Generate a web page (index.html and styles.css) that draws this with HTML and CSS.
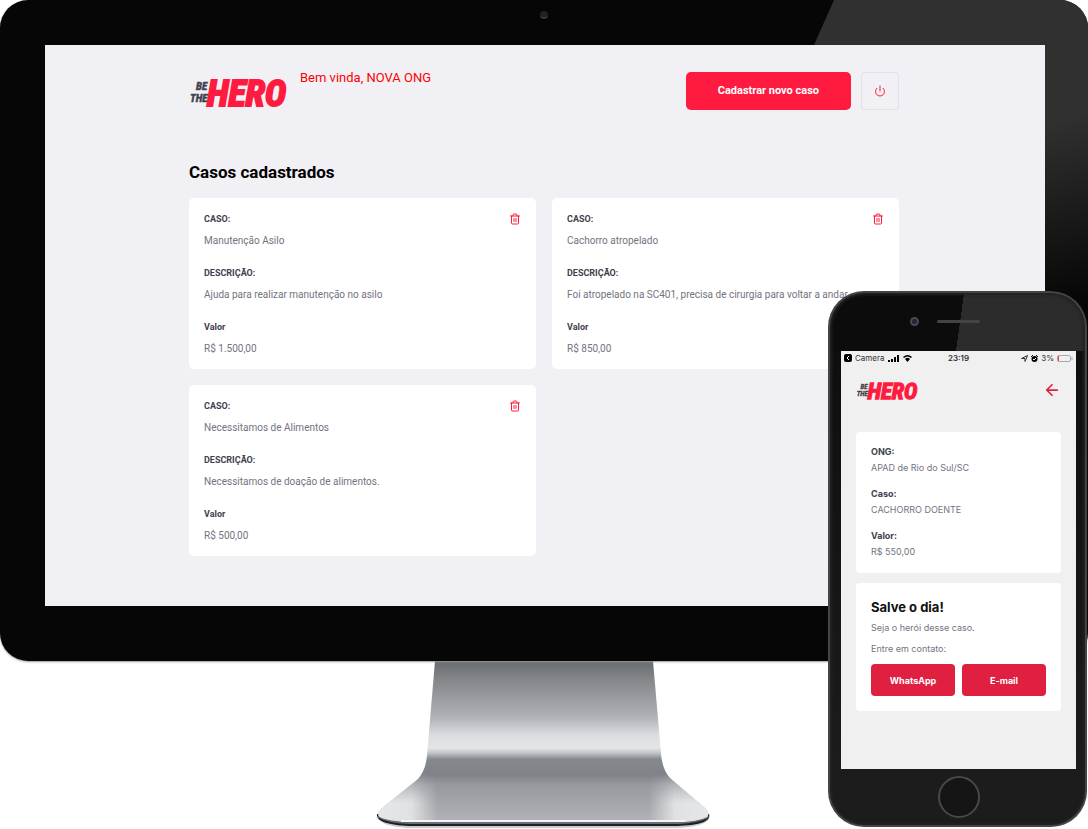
FILE: index.html
```html
<!DOCTYPE html>
<html lang="pt-BR">
<head>
<meta charset="utf-8">
<meta name="viewport" content="width=device-width, initial-scale=1">
<title>Be The Hero</title>
<link rel="stylesheet" href="styles.css">
</head>
<body>
<svg class="sprite" aria-hidden="true">
  <symbol id="trash" viewBox="0 0 24 24"><path d="M3 6h18M19 6v14a2 2 0 0 1-2 2H7a2 2 0 0 1-2-2V6m3 0V4a2 2 0 0 1 2-2h4a2 2 0 0 1 2 2v2M10 11v6M14 11v6"/></symbol>
  <symbol id="power" viewBox="0 0 24 24"><path d="M18.4 6.6a9 9 0 1 1-12.8 0M12 2v10"/></symbol>
  <symbol id="arrow" viewBox="0 0 24 24"><path d="M21 12H3M12 21l-9-9 9-9"/></symbol>
  <symbol id="logo" viewBox="0 0 98 42">
    <g class="logo-small"><text x="7" y="20">BE</text><text x="1" y="32">THE</text></g>
    <text class="logo-big" x="18" y="36">HERO</text>
  </symbol>
</svg>
<main class="scene">
  <section class="monitor">
    <span class="webcam"></span>
    <div class="screen">
      <div class="page">
        <header class="topbar">
          <svg class="logo" role="img" aria-label="Be The Hero"><use href="#logo"/></svg>
          <span class="welcome">Bem vinda, NOVA ONG</span>
          <a class="button" href="#novo">Cadastrar novo caso</a>
          <button class="power" type="button" aria-label="Sair"><svg class="icon"><use href="#power"/></svg></button>
        </header>
        <h1 class="heading">Casos cadastrados</h1>
        <ul class="cases">
          <li class="case">
            <dl class="facts">
              <dt>CASO:</dt><dd>Manutenção Asilo</dd>
              <dt>DESCRIÇÃO:</dt><dd>Ajuda para realizar manutenção no asilo</dd>
              <dt>Valor</dt><dd>R$ 1.500,00</dd>
            </dl>
            <button class="delete" type="button" aria-label="Excluir"><svg class="icon"><use href="#trash"/></svg></button>
          </li>
          <li class="case">
            <dl class="facts">
              <dt>CASO:</dt><dd>Cachorro atropelado</dd>
              <dt>DESCRIÇÃO:</dt><dd>Foi atropelado na SC401, precisa de cirurgia para voltar a andar</dd>
              <dt>Valor</dt><dd>R$ 850,00</dd>
            </dl>
            <button class="delete" type="button" aria-label="Excluir"><svg class="icon"><use href="#trash"/></svg></button>
          </li>
          <li class="case">
            <dl class="facts">
              <dt>CASO:</dt><dd>Necessitamos de Alimentos</dd>
              <dt>DESCRIÇÃO:</dt><dd>Necessitamos de doação de alimentos.</dd>
              <dt>Valor</dt><dd>R$ 500,00</dd>
            </dl>
            <button class="delete" type="button" aria-label="Excluir"><svg class="icon"><use href="#trash"/></svg></button>
          </li>
        </ul>
      </div>
    </div>
  </section>

  <svg class="stand" viewBox="0 0 334 168" aria-hidden="true">
    <defs>
      <linearGradient id="metal" x1="0" y1="0" x2="0" y2="1">
        <stop offset="0" stop-color="#676a6e"/><stop offset=".12" stop-color="#85878b"/><stop offset=".35" stop-color="#b0b2b7"/><stop offset=".46" stop-color="#dcdde0"/><stop offset=".54" stop-color="#e4e5e7"/><stop offset=".57" stop-color="#c4c6c9"/><stop offset=".61" stop-color="#85898e"/><stop offset=".71" stop-color="#7f8388"/><stop offset=".77" stop-color="#97999e"/><stop offset="1" stop-color="#b2b3b8"/>
      </linearGradient>
      <linearGradient id="shine" x1="0" y1="0" x2="1" y2="0">
        <stop offset="0" stop-color="#e6e7e9"/><stop offset=".1" stop-color="#e0e1e3"/><stop offset=".18" stop-color="#e0e1e3" stop-opacity="0"/><stop offset=".82" stop-color="#e0e1e3" stop-opacity="0"/><stop offset=".9" stop-color="#e0e1e3"/><stop offset="1" stop-color="#e6e7e9"/>
      </linearGradient>
      <linearGradient id="fade" x1="0" y1="0" x2="0" y2="1">
        <stop offset=".66" stop-color="#000"/><stop offset=".84" stop-color="#fff"/>
      </linearGradient>
      <mask id="foot"><rect width="334" height="169" fill="url(#fade)"/></mask>
    </defs>
    <path d="M1 154C-1 160 8 166 32 167H300C324 166 335 160 332 154Z" fill="#c9cacc"/>
    <path d="M0 153C-1 160 9 164 32 165H300C324 164 334 160 332 153Z" fill="#1b2023"/>
    <path d="M0 156Q10 162 32 163H300Q324 162 332 156L330 152H3Z" fill="#6b6d78"/>
    <path d="M58 0H276L284 92Q285 108 293 117L329 148Q333 153 330 156Q320 161 299 161H33Q10 160 3 156Q-1 153 4 148L41 118Q49 109 50 94Z" fill="url(#metal)"/>
    <path d="M58 0H276L284 92Q285 108 293 117L329 148Q333 153 330 156Q320 161 299 161H33Q10 160 3 156Q-1 153 4 148L41 118Q49 109 50 94Z" fill="url(#shine)" mask="url(#foot)"/>
    <path d="M24 160H308" stroke="#f6f6f7" stroke-width="2"/>
  </svg>

  <section class="phone">
    <div class="phone-top"><span class="lens"></span><span class="speaker"></span></div>
    <div class="phone-screen">
      <div class="status">
        <span class="status-left">
          <svg class="back-app" viewBox="0 0 8 8"><rect width="8" height="8" rx="2"/><path d="M5 2L3 4l2 2" stroke="#fff" fill="none"/></svg>
          Camera
          <svg class="signal" viewBox="0 0 12 7"><path d="M0 5h2v2H0zM3 4h2v3H3zM6 2h2v5H6zM9 0h2v7H9z"/></svg>
          <svg class="wifi" viewBox="0 0 9 7"><path d="M0 2Q4.500-2 9 2L8 3Q4.500 0 1 3ZM2 4Q4.500 1.500 7 4L4.500 7Z"/></svg>
        </span>
        <span class="time">23:19</span>
        <span class="status-right">
          <svg class="mini" viewBox="0 0 7 7"><path d="M.5 3.500L6.500.5 4 6.500V3.500Z" fill="none" stroke="#333"/></svg>
          <svg class="mini" viewBox="0 0 7 7"><circle cx="3.500" cy="4" r="3"/><path d="M0 2L2 0M7 2L5 0" stroke="#111"/><path d="M2 4l1 1 2-2" stroke="#eee" fill="none"/></svg>
          3%
          <svg class="battery" viewBox="0 0 16 7"><rect x=".5" y=".5" width="13" height="6" rx="1.500" fill="none" stroke="#aaa"/><path d="M1 1h1v5H1z" fill="#f33"/><path d="M15 2v3" stroke="#aaa"/></svg>
        </span>
      </div>
      <header class="app-bar">
        <svg class="app-logo" role="img" aria-label="Be The Hero"><use href="#logo"/></svg>
        <button class="back" type="button" aria-label="Voltar"><svg class="icon"><use href="#arrow"/></svg></button>
      </header>
      <dl class="app-card app-facts">
        <dt>ONG:</dt><dd>APAD de Rio do Sul/SC</dd>
        <dt>Caso:</dt><dd>CACHORRO DOENTE</dd>
        <dt>Valor:</dt><dd>R$ 550,00</dd>
      </dl>
      <section class="app-card contact">
        <h2 class="contact-title">Salve o dia!</h2>
        <p class="contact-text">Seja o herói desse caso.</p>
        <p class="contact-text">Entre em contato:</p>
        <div class="actions"><button class="action" type="button">WhatsApp</button><button class="action" type="button">E-mail</button></div>
      </section>
    </div>
    <span class="home"></span>
  </section>
</main>
</body>
</html>
```
FILE: styles.css
```css
* { box-sizing: border-box; }
body { margin: 0; background: #fff; font-family: Roboto, "Liberation Sans", sans-serif; }
h1, h2, p, ul, dl, dd { margin: 0; padding: 0; }
ul { list-style: none; }
button { font: inherit; padding: 0; border: 0; background: none; cursor: pointer; }
.sprite { position: absolute; width: 0; height: 0; }
.icon { display: block; fill: none; stroke: #ff1a3f; stroke-width: 2; stroke-linecap: round; stroke-linejoin: round; }
.logo-small { font: italic bold 11px "Liberation Sans Narrow", "Roboto Condensed", "DejaVu Sans Condensed", sans-serif; fill: #41414d; stroke: #41414d; stroke-width: 0.5; }
.logo-big { font: italic bold 36px "Liberation Sans Narrow", "Roboto Condensed", "DejaVu Sans Condensed", sans-serif; fill: #ff1a3f; stroke: #ff1a3f; stroke-width: 2; }

.scene { position: relative; }
.monitor { position: relative; padding: 45px 43px 55px 45px; background: #060606; border-radius: 28px; box-shadow: 0 1px 2px #999; overflow: hidden; }
.monitor::before { content: ""; position: absolute; top: 0; right: 0; width: 274px; height: 340px; background: linear-gradient(165deg, #303030 45%, #060606 90%); clip-path: polygon(20px 0, 100% 0, 100% 100%, 80% 100%, 80% 45px, 0 45px); }
.webcam { position: absolute; top: 11px; left: 50%; width: 8px; height: 8px; margin-left: -4px; border-radius: 50%; background: #222; border-bottom: 2px solid #383838; }
.screen { position: relative; background: #f0f0f5; padding: 25px 22px 50px 20px; }
.page { max-width: 710px; margin: 0 auto; }
.topbar { display: flex; align-items: center; gap: 10px; }
.logo { width: 98px; height: 42px; flex: none; }
.welcome { align-self: flex-start; flex: 1; margin-left: 3px; font-size: 13px; line-height: 16px; color: #f00; }
.button { padding: 0 32px; line-height: 38px; border-radius: 5px; background: #ff1a3f; color: #fff; font-size: 11px; font-weight: 700; text-decoration: none; }
.power { display: grid; place-items: center; width: 38px; height: 38px; border: 1px solid #e2e2e8; border-radius: 3px; }
.power .icon { width: 12px; height: 12px; }
.heading { margin: 48px 0 14px; font-size: 17px; line-height: 24px; color: #000; }
.cases { display: grid; grid-template-columns: repeat(auto-fit, minmax(280px, 1fr)); gap: 16px; }
.case { display: flex; justify-content: space-between; align-items: flex-start; padding: 15px 15px 12px; background: #fff; border-radius: 5px; }
.facts dt { font-size: 9px; line-height: 12px; font-weight: 700; color: #41414d; }
.facts dd { margin: 8px 0 18px; font-size: 10px; line-height: 16px; color: #737380; }
.facts dd:last-child { margin-bottom: 0; }
.delete .icon { width: 12px; height: 12px; }
.stand { display: block; width: 334px; max-width: 100%; margin: 0 auto; }

.phone { position: absolute; right: 1px; bottom: 2px; width: 259px; padding: 0 11px 0 13px; border-radius: 36px; background: linear-gradient(98deg, #0c0c0c 51%, #2c2c2c 51%) 0 0 / 100% 60px no-repeat, linear-gradient(#0c0c0c, #1c1c1c 90%); box-shadow: inset 0 0 0 2px #444, inset 0 0 3px 4px #222; font-family: Inter, "Liberation Sans", sans-serif; }
.phone-top { display: flex; align-items: flex-start; gap: 18px; height: 60px; padding: 26px 0 0 69px; }
.lens { width: 9px; height: 9px; border-radius: 50%; background: #24243c; border: 2px solid #4a4a50; }
.speaker { width: 43px; height: 3px; margin-top: 3px; border-radius: 2px; background: #444; }
.phone-screen { background: #f0f0f0; padding: 0 15px 58px; }
.status { display: grid; grid-template-columns: 1fr auto 1fr; align-items: center; margin: 0 -12px; height: 14px; font-size: 8px; line-height: 14px; color: #333; }
.status-left, .status-right { display: flex; align-items: center; gap: 3px; }
.status-right { justify-content: flex-end; }
.time { font-weight: 600; }
.back-app { width: 8px; height: 8px; }
.signal { width: 12px; height: 7px; }
.wifi { width: 9px; height: 7px; }
.mini { width: 7px; height: 7px; }
.battery { width: 16px; height: 7px; }
.app-bar { display: flex; justify-content: space-between; align-items: center; margin: 11px 0 29px; }
.app-logo { width: 62px; height: 27px; }
.back { margin-right: 2px; }
.back .icon { width: 14px; height: 14px; stroke: #e02041; stroke-width: 3; }
.app-card { background: #fff; border-radius: 4px; padding: 14px 15px; }
.app-facts { padding-bottom: 13px; }
.app-facts dt { font-size: 9px; line-height: 12px; font-weight: 700; color: #41414d; }
.app-facts dd { margin: 2px 0 12px; font-size: 9px; line-height: 16px; color: #737380; }
.app-facts dd:last-child { margin-bottom: 0; }
.contact { margin-top: 10px; padding-bottom: 15px; }
.contact-title { font-size: 13px; line-height: 20px; color: #111; }
.contact-text { font-size: 9px; line-height: 21px; color: #737380; }
.actions { display: grid; grid-template-columns: 1fr 1fr; gap: 7px; margin-top: 5px; }
.action { height: 32px; border-radius: 4px; background: #e02041; color: #fff; font-size: 9px; font-weight: 700; }
.home { display: block; width: 42px; height: 42px; margin: 7px auto 9px; border: 2px solid #484848; border-radius: 50%; background: #151515; }
```
